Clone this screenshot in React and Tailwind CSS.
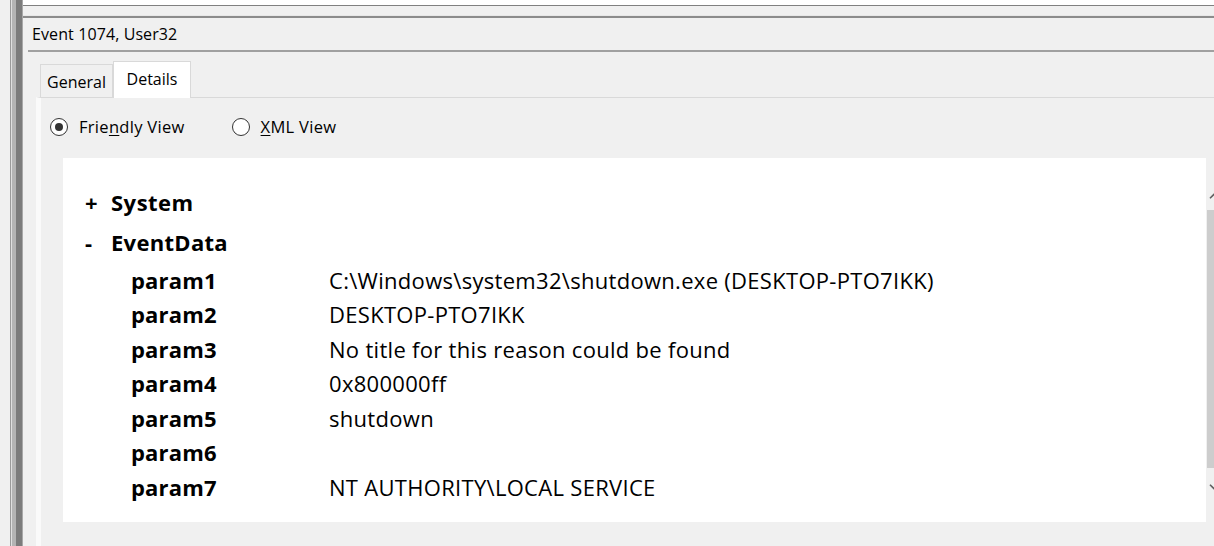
import { ChevronUp, ChevronDown } from "lucide-react";

const params = [
    { name: "param1", value: "C:\\Windows\\system32\\shutdown.exe (DESKTOP-PTO7IKK)" },
    { name: "param2", value: "DESKTOP-PTO7IKK" },
    { name: "param3", value: "No title for this reason could be found" },
    { name: "param4", value: "0x800000ff" },
    { name: "param5", value: "shutdown" },
    { name: "param6", value: "" },
    { name: "param7", value: "NT AUTHORITY\\LOCAL SERVICE" },
];

function Radio({ checked, children }) {
    return (
        <label className="flex items-center gap-[11px]">
            <span className="w-[18px] h-[18px] rounded-full border border-[#333] bg-white flex items-center justify-center">
                {checked && <span className="w-[8px] h-[8px] rounded-full bg-[#333]" />}
            </span>
            <span>{children}</span>
        </label>
    );
}

export default function App() {
    return (
        <div className="w-[1214px] h-[546px] overflow-hidden bg-[#f0f0f0] flex text-[#000] font-['Open_Sans',sans-serif]">
            {/* splitter on the left */}
            <div className="w-[10px] shrink-0" />
            <div className="w-[13px] shrink-0 flex">
                <div className="w-[1px] bg-[#9a9a9a]" />
                <div className="w-[1px] bg-[#e0e0e0]" />
                <div className="w-[4px] bg-[#b4b4b4]" />
                <div className="w-[6px] bg-[#7c7c7c]" />
                <div className="w-[1px] bg-[#a8a8a8]" />
            </div>

            {/* main area */}
            <div className="flex-1 flex flex-col min-w-0">
                {/* top list pane bottom edge */}
                <div className="h-[6px] bg-white border-b border-[#808080]" />
                <div className="h-[10px] border-b border-[#e8e8e8]" />
                <div className="h-[2px] bg-[#8c8c8c]" />

                {/* header */}
                <div className="h-[32px] flex items-center pl-[9px] text-[16px] tracking-[0.1px]">
                    Event 1074, User32
                </div>
                <div className="ml-[5px] h-[2px] bg-[#a0a0a0]" />

                {/* tabs */}
                <div className="flex-1 flex flex-col pl-[13px] pt-[8px]">
                    <div className="flex items-end pl-[4px] h-[37px] text-[16px]">
                        <div className="w-[73px] h-[33px] border border-b-0 border-[#d9d9d9] flex items-center justify-center pt-[2px]">
                            General
                        </div>
                        <div className="w-[78px] h-[37px] -mb-[1px] relative z-10 bg-white border border-b-0 border-[#d9d9d9] flex items-center justify-center pb-[3px]">
                            Details
                        </div>
                    </div>
                    <div className="flex-1 flex flex-col border-t border-[#d9d9d9] border-l-[5px] border-l-[#fafafa]">
                        <div className="h-[60px] flex items-center gap-[47px] pl-[9px] pb-[2px] text-[16.5px] tracking-[0.3px]">
                            <Radio checked>
                                Frie<span className="underline underline-offset-2">n</span>dly View
                            </Radio>
                            <Radio>
                                <span className="underline underline-offset-2">X</span>ML View
                            </Radio>
                        </div>

                        <div className="flex ml-[22px]">
                            <div className="w-[1143px] h-[364px] shrink-0 bg-white pt-[24px] pl-[22px] text-[22px] tracking-[0.3px]">
                                <div className="flex items-center h-[40px] font-bold">
                                    <span className="w-[26px]">+</span>
                                    <span className="tracking-[0.5px]">System</span>
                                </div>
                                <div className="flex items-center h-[40px] font-bold">
                                    <span className="w-[26px]">-</span>
                                    <span>EventData</span>
                                </div>
                                <div className="pl-[46px] pt-[1px]">
                                    {params.map((p) => (
                                        <div key={p.name} className="flex items-center h-[34.5px]">
                                            <span className="w-[198px] font-bold tracking-[0.2px]">{p.name}</span>
                                            <span>{p.value}</span>
                                        </div>
                                    ))}
                                </div>
                            </div>

                            {/* scrollbar, cut off at the right edge */}
                            <div className="w-[17px] h-[364px] shrink-0 ml-[1px] flex flex-col">
                                <div className="h-[52px] flex items-end pb-[7px]">
                                    <ChevronUp size={14} strokeWidth={3} className="text-[#606060]" />
                                </div>
                                <div className="w-full h-[258px] bg-[#cdcdcd]" />
                                <div className="h-[54px] pt-[12px]">
                                    <ChevronDown size={14} strokeWidth={3} className="text-[#606060]" />
                                </div>
                            </div>
                        </div>
                    </div>
                </div>
            </div>
        </div>
    );
}
